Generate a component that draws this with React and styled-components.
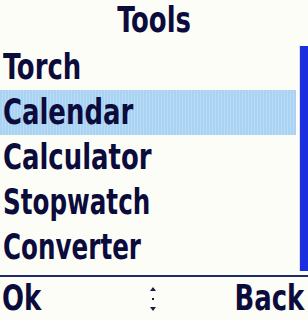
import React from "react";
import styled, { createGlobalStyle } from "styled-components";

const Global = createGlobalStyle`
  html, body { margin: 0; padding: 0; background: #fdfdf7; }
  #root { width: 308px; height: 320px; }
`;

const FONT = `"Liberation Sans Narrow", "DejaVu Sans Condensed", "Liberation Sans", sans-serif`;
const INK = "#0b0b3c";

const Screen = styled.div`
  width: 308px;
  height: 320px;
  display: flex;
  flex-direction: column;
  background: #fdfdf7;
  font-family: ${FONT};
  font-weight: 700;
  color: ${INK};
  overflow: hidden;
`;

const Label = styled.span`
  display: inline-block;
  white-space: nowrap;
  transform: scaleX(${(p) => p.$scale || 0.8});
  transform-origin: ${(p) => p.$origin || "left"} center;
`;

const Title = styled.div`
  height: 45px;
  display: flex;
  align-items: center;
  justify-content: center;
  font-size: 36px;
  line-height: 45px;
  padding-bottom: 6px;
  box-sizing: border-box;
`;

const ListArea = styled.div`
  display: flex;
  height: 226px;
`;

const Items = styled.div`
  flex: 1;
  display: flex;
  flex-direction: column;
  padding-right: 2px;
`;

const Item = styled.div`
  height: 45px;
  display: flex;
  align-items: center;
  padding-left: 3px;
  padding-bottom: 2px;
  box-sizing: border-box;
  font-size: 36px;
  line-height: 45px;
  background: ${(p) =>
    p.$selected
      ? "repeating-linear-gradient(90deg, #a9d2f3 0px, #a9d2f3 2px, #b8dcf6 2px, #b8dcf6 3px)"
      : "transparent"};
`;

const Scroll = styled.div`
  width: 8px;
  margin-left: 1px;
  padding-top: 1px;
  border-left: 1px solid #d8dde6;
  display: flex;
  flex-direction: column;
`;

const Thumb = styled.div`
  flex: 1;
  background: #1c2fe0;
`;

const Divider = styled.div`
  height: 2px;
  margin-top: 4px;
  background: #1e2a6a;
`;

const SoftKeys = styled.div`
  flex: 1;
  display: grid;
  grid-template-columns: 1fr auto 1fr;
  align-items: center;
  padding: 0 4px 2px 2px;
  font-size: 36px;
`;

const Key = styled.div`
  line-height: 40px;
  text-align: ${(p) => p.$align};
`;

const Nav = styled.svg`
  display: block;
  margin-top: 4px;
`;

export default function App() {
  const items = [
    { t: "Torch", s: 0.8 },
    { t: "Calendar", s: 0.8 },
    { t: "Calculator", s: 0.8 },
    { t: "Stopwatch", s: 0.76 },
    { t: "Converter", s: 0.76 },
  ];
  return (
    <>
      <Global />
      <Screen>
        <Title>
          <Label $origin="center">Tools</Label>
        </Title>
        <ListArea>
          <Items>
            {items.map((it, i) => (
              <Item key={it.t} $selected={i === 1}>
                <Label $scale={it.s}>{it.t}</Label>
              </Item>
            ))}
          </Items>
          <Scroll>
            <Thumb />
          </Scroll>
        </ListArea>
        <Divider />
        <SoftKeys>
          <Key $align="left">
            <Label>Ok</Label>
          </Key>
          <Nav width="8" height="30" viewBox="0 0 8 30">
            <path d="M4 2 L7 6 L1 6 Z" fill="#1a1a4a" />
            <rect x="3" y="13" width="2" height="2" fill="#1a1a4a" />
            <path d="M1 22 L7 22 L4 26 Z" fill="#1a1a4a" />
          </Nav>
          <Key $align="right">
            <Label $origin="right">Back</Label>
          </Key>
        </SoftKeys>
      </Screen>
    </>
  );
}
